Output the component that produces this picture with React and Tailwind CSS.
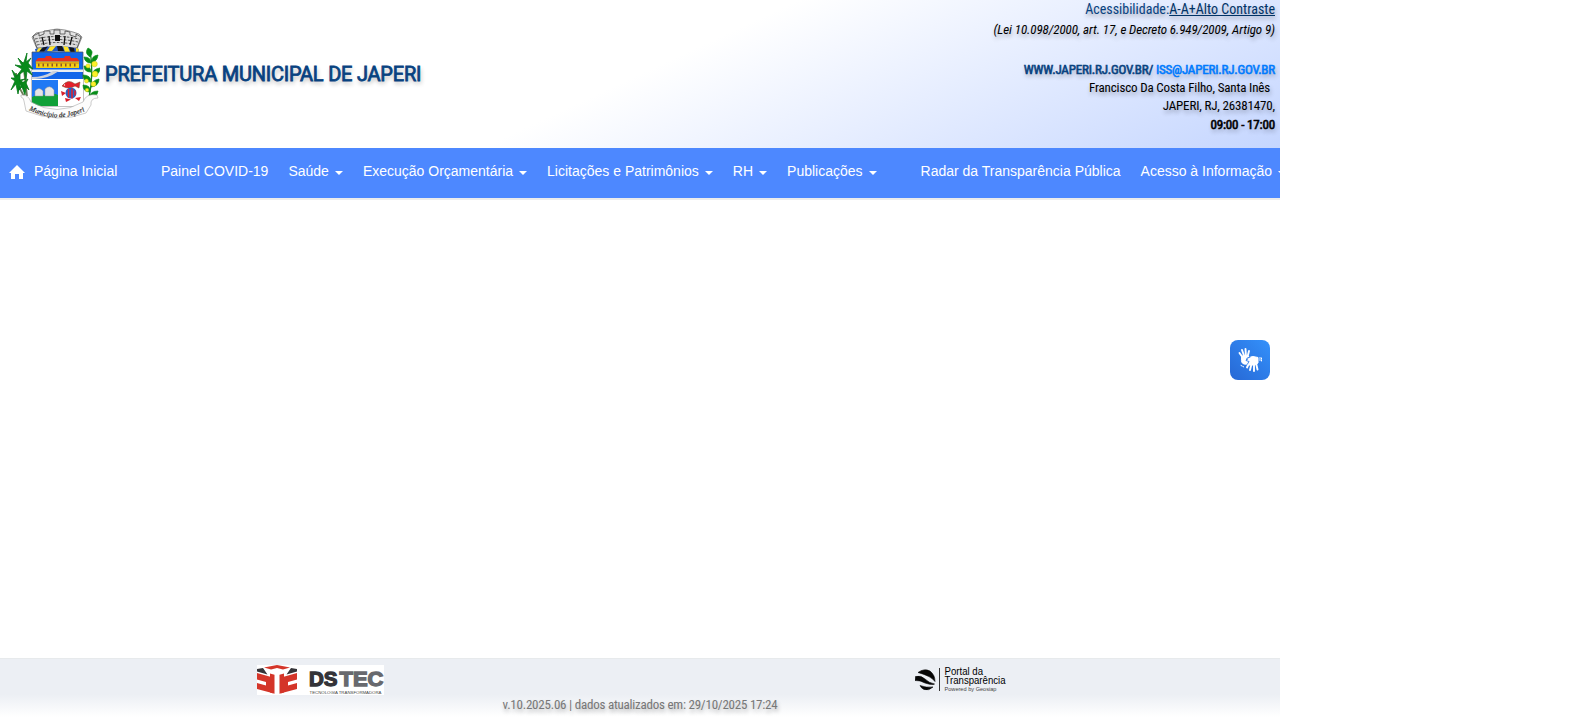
const shadow = "[text-shadow:1px_3px_4px_rgba(0,0,0,0.3)]";

function Crest() {
  return (
    <svg width="90" height="94" viewBox="10 27 90 94" className="ml-[10px] shrink-0">
      <path d="M32 37L36 33L42 32L50 30L57 29L65 30L73 32L79 34L82 37L77 49H37Z" fill="#e4e4e4" stroke="#555" strokeWidth=".6" />
      <path d="M33 36L39 33V36L44 34V31H50V34H54V30H60V34H65V31L70 32V35L76 37V34L81 37L77 48H37Z" fill="#ddd" stroke="#333" strokeWidth=".7" />
      <path d="M35 39Q57 34 79 39M36 42Q57 37 78 42M37 45Q57 40 77 45" fill="none" stroke="#444" strokeWidth=".9" strokeDasharray="2.6 1.4" />
      <path d="M42 37l2 8M49 36l1 9M65 36l-1 9M72 37l-2 8" stroke="#111" strokeWidth="1.3" />
      <path d="M55 35h5v6h-5z" fill="#111" />
      <path d="M35 49Q57 43 79 49L78 53Q57 50 36 53Z" fill="#2458c4" />
      <path d="M38 48.5l4-1-3 5h-3zM50 46.5l6-.5-4 5h-5zM63 46l5 1 2 5h-5zM76 48l3 1-1 4h-2z" fill="#ffe329" />
      <path d="M43 47.5l5-1-4 5h-5zM57 46l5 0 2 5h-6zM69 47l5 1 1 5h-4z" fill="#16171c" />
      <path d="M32 52H83V106H32Z" fill="#1265ea" stroke="#555" strokeWidth=".7" />
      <path d="M35 61.5L38 58H45L46 56H51L52 58H64L65 56H70L71 58H77L80 61.5Z" fill="#e53124" />
      <path d="M36 61.5H79V68H36Z" fill="#f2cf16" />
      <path d="M38 65h40" stroke="#925321" strokeWidth="3" strokeDasharray="1.5 3" />
      <path d="M35 63h44" stroke="#b46d21" strokeWidth=".7" />
      <path d="M32 69.5H83V72H32Z" fill="#e9edf2" />
      <path d="M32 77Q44 77 53 71H59Q46 80 32 79Z" fill="#cdd2dc" />
      <path d="M59 79H83V106H59Z" fill="#fff" />
      <path d="M32 80H58V106H32Z" fill="#2079f4" />
      <path d="M32 97Q40 92 47 96Q52 92 58 95V106H32Z" fill="#10a038" />
      <path d="M35 96V91Q39 86 43 91V96ZM45 96V89Q50 84 54 90V96Z" fill="#e6e6e6" stroke="#999" strokeWidth=".5" />
      <path d="M58.5 79V106M32 79.5H83" stroke="#fff" strokeWidth="1" />
      <path d="M62 86Q68 78 75 84L80 82L79 88L75 86Q69 90 62 86Z" fill="#e3222c" stroke="#742" strokeWidth=".5" />
      <circle cx="64.5" cy="85" r=".7" fill="#fff" />
      <ellipse cx="71" cy="93" rx="5.5" ry="5.5" fill="#2364c7" />
      <path d="M68.5 89V97.500M72 88.500V98.500M75 90.500V95.500" stroke="#e3222c" strokeWidth="1.5" />
      <path d="M61 91L66 93L62 96ZM75 98L81 97L79 101ZM65 98L71 99.5L66 102Z" fill="#d7212c" />
      <path d="M27 96Q25 78 23 62M24 96Q17 85 16 73" fill="none" stroke="#6a7b55" strokeWidth="1.8" />
      <path d="M23 63l-5-5 4 8-7-1 7 4-6 8 8-6 2 9 1-9 5 4-4-8 5 2-5-6 3-5-5 4 1-9-3 9M17 76l-5-6 3 8-4 0 4 3-4 9 5-6 2 10 2-10 4 5-3-8 4-2-5 1v-8zM22 82l-3-3 2 6-3 6 4-4 3 8 1-8 3 3-3-7 2-4-4 3z" fill="#078b1b" stroke="#087a1a" strokeWidth=".8" />
      <path d="M89 98Q94 73 90 50" fill="none" stroke="#16851c" strokeWidth="1.3" />
      <path d="M90 57Q84 53 88 48Q95 51 90 57ZM91 63Q85 63 84 57Q91 57 91 63ZM92 62Q97 62 98 55Q91 56 92 62ZM91 72Q84 72 84 66Q91 66 91 72ZM92 76Q100 75 100 68Q92 69 92 76ZM91 82Q83 82 83 75Q91 75 91 82ZM91 87Q99 86 99 79Q92 80 91 87ZM90 92Q83 92 83 85Q91 85 90 92ZM89 98Q97 98 98 91Q90 91 89 98Z" fill="#078d18" stroke="#078d18" strokeWidth=".7" />
      <g fill="#fcf12a" stroke="#b2b40a" strokeWidth=".4"><circle cx="94.5" cy="64" r="2.8" /><circle cx="88" cy="66" r="2.1" /><circle cx="95" cy="74" r="2.9" /><circle cx="86.5" cy="81" r="2" /><circle cx="93.5" cy="84" r="2.5" /><circle cx="87" cy="90" r="1.8" /></g>
      <path d="M21 95Q28 94 31 102Q57 117 83 102Q86 93 97 95L98 98Q90 98 91 105L86 113Q58 124 26 111L24 101Q24 98 21 97Z" fill="#fcfcfc" stroke="#aaa" strokeWidth=".6" />
      <path id="ribbon" d="M29 110Q57 124.5 87 110" fill="none" />
      <text fontFamily="Liberation Serif, serif" fontSize="7" fontStyle="italic" fill="#222" stroke="#222" strokeWidth=".15"><textPath href="#ribbon" textLength="58">Município de Japeri</textPath></text>
    </svg>
  );
}

function Item({ children, caret, className = "" }) {
  return (
    <a className={`flex shrink-0 items-center px-[10px] ${className}`}>
      <span>{children}</span>
      {caret && <span className="ml-[6px] mt-[3px] h-0 w-0 border-x-4 border-t-4 border-x-transparent border-t-white" />}
    </a>
  );
}

function Dstec() {
  return (
    <svg width="127" height="30" viewBox="0 0 127 30" className="ml-[257px]">
      <path fill="#fff" d="M0 0h127v30H0z" />
      <path fill="#d43529" d="M7 2.4L20 0L33 2.4L26 4.5L20 3L14 4.5Z" />
      <path fill="#343438" d="M0 4L6 3L10.5 9.5L0 6.5ZM40 4L34 3L29.5 9.5L40 6.5Z" />
      <path fill="#d43529" d="M0 8L16 12.5V28.3L0 24V18L9 20.5V17L0 14.5ZM40 8L24 12.5V28.3L40 24V18L31 20.5V17L40 14.5Z" />
      <path fill="#d43529" d="M13 8.5L17.5 9.8V28.7L13 27.5ZM27 8.5L22.5 9.8V28.7L27 27.5Z" />
      <text x="52" y="21" fill="#343439" fontFamily="Liberation Sans, sans-serif" fontWeight="700" fontSize="20.5" stroke="#343439" strokeWidth="1.3" textLength="28.5" lengthAdjust="spacingAndGlyphs">DS</text>
      <text x="82.5" y="21" fill="#68696e" fontFamily="Liberation Sans, sans-serif" fontWeight="700" fontSize="20.5" stroke="#68696e" strokeWidth="1.3" textLength="44" lengthAdjust="spacingAndGlyphs">TEC</text>
      <text x="52.5" y="29.3" fill="#444" fontFamily="Liberation Sans, sans-serif" fontSize="4" textLength="72" lengthAdjust="spacingAndGlyphs">TECNOLOGIA TRANSFORMADORA</text>
    </svg>
  );
}

function Portal() {
  return (
    <svg width="96" height="28" viewBox="0 0 96 28" className="ml-[531px]">
      <path d="M3 6.500Q9 2 15 5Q20 9 20 15.500Q16 10 3 6.500ZM0.500 10.500Q6 9 10 13Q14 17 19.500 18Q18 19.500 10 17Q5 14 0 14.500ZM5 19.500Q11 22 18 21Q14 25 9 23.500Q6 22 5 19.500Z" fill="#050505" stroke="#050505" strokeWidth=".6" />
      <path d="M24.5 2V25" stroke="#333" />
      <text x="29.5" y="9.2" fontFamily="Liberation Sans, sans-serif" fontSize="10" textLength="38.5" lengthAdjust="spacingAndGlyphs">Portal da</text>
      <text x="29.5" y="18" fontFamily="Liberation Sans, sans-serif" fontSize="10" textLength="61" lengthAdjust="spacingAndGlyphs">Transparência</text>
      <text x="29.5" y="25" fontFamily="Liberation Sans, sans-serif" fontSize="5.7" fill="#444" textLength="52" lengthAdjust="spacingAndGlyphs">Powered by Geosiap</text>
    </svg>
  );
}

export default function App() {
  return (
    <div className="h-[720px] w-full overflow-hidden bg-white">
      <div className="relative flex h-[720px] w-[1280px] flex-col overflow-hidden font-['Roboto_Condensed',Roboto,sans-serif] font-stretch-condensed">
        <header className="flex h-[148px] shrink-0 items-center justify-between bg-[linear-gradient(155deg,#fff_50%,#c5d6ff)]">
          <div className="flex items-center">
            <Crest />
            <h1 className={`ml-[5px] w-[330px] whitespace-nowrap pb-[1px] font-[Roboto] text-[20px] font-normal font-stretch-normal tracking-[-0.22px] [-webkit-text-stroke:0.8px_#084280] text-[#084280] ${shadow}`}>PREFEITURA MUNICIPAL DE JAPERI</h1>
          </div>
          <div className={`flex h-full flex-col items-end whitespace-nowrap pr-[5px] text-[13px] tracking-[-0.16px] text-black ${shadow}`}>
            <p className="h-5 text-[14px] leading-[19px] tracking-[0px] text-[#084280]">Acessibilidade:<a className="text-[#003366] underline">A-A+Alto Contraste</a></p>
            <p className="h-10 italic leading-5 tracking-[-0.09px]">(Lei 10.098/2000, art. 17, e Decreto 6.949/2009, Artigo 9)</p>
            <p className="h-[19px] leading-5 tracking-[-0.19px] text-[#084280] [-webkit-text-stroke:0.6px]">WWW.JAPERI.RJ.GOV.BR/ <a className="text-[#007bff]">ISS@JAPERI.RJ.GOV.BR</a></p>
            <p className="h-[18px] pr-[5px] leading-[18px]">Francisco Da Costa Filho, Santa Inês</p>
            <p className="h-[18px] leading-[18px]">JAPERI, RJ, 26381470,</p>
            <p className="leading-5 [-webkit-text-stroke:0.6px]">09:00 - 17:00</p>
          </div>
        </header>
        <nav className="flex h-[52px] shrink-0 overflow-hidden whitespace-nowrap border-b-2 border-[#ececec] bg-[#4d88ff] pb-[3px] font-['Liberation_Sans',sans-serif] text-[14px] font-stretch-normal text-white">
          <a className="flex w-[151px] shrink-0 items-center pl-[9px]">
            <svg width="16" height="15" viewBox="0 0 16 15" className="mr-[9px] mt-[2px]"><path fill="white" d="M8 0L16 8H14V14H10V9H6V14H2V8H0Z" /></svg>
            Página Inicial
          </a>
          <Item>Painel COVID-19</Item>
          <Item caret>Saúde</Item>
          <Item caret>Execução Orçamentária</Item>
          <Item caret>Licitações e Patrimônios</Item>
          <Item caret>RH</Item>
          <Item caret>Publicações</Item>
          <Item className="ml-[24px]">Radar da Transparência Pública</Item>
          <Item caret>Acesso à Informação</Item>
        </nav>
        <main className="flex-1" />
        <footer className="h-[62px] shrink-0 border-t border-[#e7eaec] bg-[linear-gradient(#eceff4_0%,#eceff4_58%,#fff_95%)]">
          <div className="flex h-[36px] items-center pt-[6px]"><Dstec /><Portal /></div>
          <p className={`text-center text-[13px] leading-5 tracking-[-0.23px] text-[#777] ${shadow}`}>v.10.2025.06 | dados atualizados em: 29/10/2025 17:24</p>
        </footer>
        <button aria-label="Libras" className="absolute left-[1230px] top-[340px] flex h-10 w-10 items-center justify-center rounded-lg bg-linear-to-tr from-[#2768d5] to-[#3491fb]">
          <svg width="26" height="28" viewBox="0 0 26 28" fill="none" stroke="white" strokeLinecap="round" strokeLinejoin="round" strokeWidth="1.9">
            <path d="M6 12L2.500 7M7.500 11L5 4M9 11L8.500 3M10.500 11L12 5M12 17L10 21.500M14.500 18L13 24M17 18L17 25M19 17L20.500 23.500" />
            <path fill="white" strokeWidth="1" d="M5 10H11.500L12 11.500Q9 12 9 14.500L12 16L10 18Q5 19 4.500 15Z" />
            <path fill="white" strokeWidth="1" d="M11 13.500Q12 10.500 16 10.500L21 11.500V17L18 19H12L12.500 16L10.500 15.500Z" />
            <path stroke="#2e7ce9" strokeWidth=".9" d="M13 11Q9.500 11 9 14.500L12 15.500L10.500 18" />
            <path strokeWidth="1" strokeDasharray="1 1" d="M4 19.500L7 21M23 11.500V15.500M24.500 12V15" />
          </svg>
        </button>
      </div>
    </div>
  );
}
